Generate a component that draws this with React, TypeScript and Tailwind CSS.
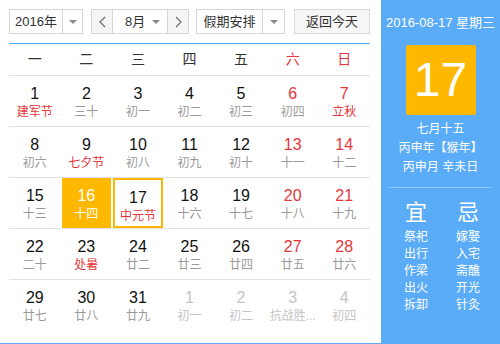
import React from "react";

type Day = { n: number; l: string; red?: boolean; lred?: boolean; other?: boolean; kind?: "sel" | "today" };

const weeks: Day[][] = [
  [
    { n: 1, l: "建军节", lred: true },
    { n: 2, l: "三十" },
    { n: 3, l: "初一" },
    { n: 4, l: "初二" },
    { n: 5, l: "初三" },
    { n: 6, l: "初四", red: true },
    { n: 7, l: "立秋", red: true, lred: true },
  ],
  [
    { n: 8, l: "初六" },
    { n: 9, l: "七夕节", lred: true },
    { n: 10, l: "初八" },
    { n: 11, l: "初九" },
    { n: 12, l: "初十" },
    { n: 13, l: "十一", red: true },
    { n: 14, l: "十二", red: true },
  ],
  [
    { n: 15, l: "十三" },
    { n: 16, l: "十四", kind: "sel" },
    { n: 17, l: "中元节", lred: true, kind: "today" },
    { n: 18, l: "十六" },
    { n: 19, l: "十七" },
    { n: 20, l: "十八", red: true },
    { n: 21, l: "十九", red: true },
  ],
  [
    { n: 22, l: "二十" },
    { n: 23, l: "处暑", lred: true },
    { n: 24, l: "廿二" },
    { n: 25, l: "廿三" },
    { n: 26, l: "廿四" },
    { n: 27, l: "廿五", red: true },
    { n: 28, l: "廿六", red: true },
  ],
  [
    { n: 29, l: "廿七" },
    { n: 30, l: "廿八" },
    { n: 31, l: "廿九" },
    { n: 1, l: "初一", other: true },
    { n: 2, l: "初二", other: true },
    { n: 3, l: "抗战胜...", other: true },
    { n: 4, l: "初四", other: true },
  ],
];

const weekdays = ["一", "二", "三", "四", "五", "六", "日"];
const yi = ["祭祀", "出行", "作梁", "出火", "拆卸"];
const ji = ["嫁娶", "入宅", "斋醮", "开光", "针灸"];

const Caret = () => (
  <svg width="8" height="4" viewBox="0 0 8 4">
    <polygon points="0,0 8,0 4,4" fill="#8a8a8a" />
  </svg>
);

const Chevron = ({ dir }: { dir: "l" | "r" }) => (
  <svg width="7" height="12" viewBox="0 0 7 12">
    <polyline
      points={dir === "l" ? "6,1 1,6 6,11" : "1,1 6,6 1,11"}
      fill="none"
      stroke="#666"
      strokeWidth="1.1"
    />
  </svg>
);

function Cell({ d }: { d: Day }) {
  const sel = d.kind === "sel";
  const today = d.kind === "today";
  let num = "text-[#111]";
  let lun = "text-[#9a9a9a]";
  if (d.red) num = "text-[#e8363b]";
  if (d.lred) lun = "text-[#e8363b]";
  if (d.other) {
    num = "text-[#c4c4c4]";
    lun = "text-[#c4c4c4]";
  }
  if (sel) {
    num = "text-white";
    lun = "text-white";
  }
  return (
    <div
      className={`mx-[1px] flex flex-col items-center pt-[9px] ${
        sel ? "bg-[#ffb800]" : ""
      } ${today ? "border-2 border-[#ffb800] pt-[7px]" : ""}`}
    >
      <span className={`text-[16px] leading-[18px] ${num}`}>{d.n}</span>
      <span className={`text-[12px] leading-[18px] whitespace-nowrap ${lun}`}>{d.l}</span>
    </div>
  );
}

export default function App() {
  return (
    <div
      className="flex w-[500px] h-[344px] overflow-hidden bg-white"
      style={{ fontFamily: '"Liberation Sans", "Noto Sans CJK SC", sans-serif' }}
    >
      {/* left: calendar */}
      <div className="flex w-[381px] flex-col border-b border-[#5aabf8]">
        <div className="flex flex-col flex-1 pl-[9px] pr-[11px]">
          <div className="mt-[9px] flex h-[25px] items-stretch text-[13px] text-[#333]">
            <div className="flex w-[74px] border border-[#d6d6d6]">
              <div className="flex w-[53px] items-center justify-center border-r border-[#d6d6d6]">2016年</div>
              <div className="flex flex-1 items-center justify-center">
                <Caret />
              </div>
            </div>
            <div className="ml-[8px] flex w-[98px] border border-[#d6d6d6]">
              <div className="flex w-[21px] items-center justify-center border-r border-[#d6d6d6] bg-[#f5f5f5]">
                <Chevron dir="l" />
              </div>
              <div className="flex flex-1 items-center pl-[12px]">
                <span className="flex-1">8月</span>
                <span className="mr-[7px] flex">
                  <Caret />
                </span>
              </div>
              <div className="flex w-[21px] items-center justify-center border-l border-[#d6d6d6] bg-[#f5f5f5]">
                <Chevron dir="r" />
              </div>
            </div>
            <div className="ml-[7px] flex w-[89px] border border-[#d6d6d6]">
              <div className="flex w-[66px] items-center justify-center border-r border-[#d6d6d6]">假期安排</div>
              <div className="flex flex-1 items-center justify-center">
                <Caret />
              </div>
            </div>
            <div className="ml-[9px] flex w-[76px] items-center justify-center border border-[#dadada] bg-[#f6f6f6]">
              返回今天
            </div>
          </div>

          <div className="mt-[9px] h-[1px] bg-[#5aa9ee]" />

          <div className="grid h-[32px] grid-cols-7 border-b border-[#e1e1e1] text-[14px]">
            {weekdays.map((w, i) => (
              <div
                key={w}
                className={`flex items-center justify-center ${i >= 5 ? "text-[#e8363b]" : "text-[#333]"}`}
              >
                {w}
              </div>
            ))}
          </div>

          {weeks.map((wk, i) => (
            <div
              key={i}
              className={`grid grid-cols-7 ${
                i < weeks.length - 1 ? "h-[51px] border-b border-[#e1e1e1]" : "flex-1"
              }`}
            >
              {wk.map((d, j) => (
                <Cell key={j} d={d} />
              ))}
            </div>
          ))}
        </div>
      </div>

      {/* right: today detail */}
      <div className="flex w-[119px] flex-col items-center bg-[#5aabf8] text-white">
        <div className="mt-[14px] text-[13px] leading-[18px] whitespace-nowrap">2016-08-17 星期三</div>
        <div className="mt-[13px] flex h-[70px] w-[70px] items-center justify-center rounded-[2px] bg-[#ffb800] text-[48px] leading-none">
          17
        </div>
        <div className="mt-[5px] flex flex-col items-center text-[12px] leading-[19px]">
          <span>七月十五</span>
          <span className="whitespace-nowrap">丙申年【猴年】</span>
          <span>丙申月 辛未日</span>
        </div>
        <div className="mt-[10px] h-[1px] w-[103px] bg-[#8fc7fb]" />
        <div className="mt-[12px] flex w-full pl-[9px]">
          <div className="flex w-[52px] flex-col items-center">
            <span className="text-[22px] leading-[26px]">宜</span>
            <div className="mt-[3px] flex flex-col text-[12px] leading-[17px]">
              {yi.map((s) => (
                <span key={s}>{s}</span>
              ))}
            </div>
          </div>
          <div className="flex w-[52px] flex-col items-center">
            <span className="text-[22px] leading-[26px]">忌</span>
            <div className="mt-[3px] flex flex-col text-[12px] leading-[17px]">
              {ji.map((s) => (
                <span key={s}>{s}</span>
              ))}
            </div>
          </div>
        </div>
      </div>
    </div>
  );
}
